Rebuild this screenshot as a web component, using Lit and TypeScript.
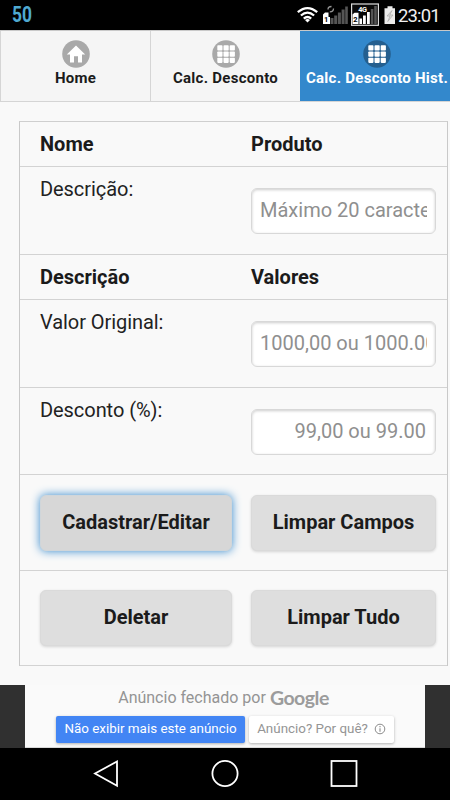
import { LitElement, html, css, svg } from "lit";
import { customElement } from "lit/decorators.js";
import { classMap } from "lit/directives/class-map.js";

const homeIcon = svg`<path d="M14 5.5 L4.8 14.5 H8 V22.5 H12 V16.3 H16 V22.5 H20 V14.5 H23.2 Z" fill="#fff"/>`;
const gridIcon = svg`${[5.3, 11.5, 17.7].map((y) =>
  [5.3, 11.5, 17.7].map((x) => svg`<rect x=${x} y=${y} width="5.2" height="5.2" rx="0.8" fill="#fff"/>`)
)}`;

@customElement("app-root")
export class AppRoot extends LitElement {
  static styles = css`
    :host {
      display: flex;
      flex-direction: column;
      width: 450px;
      height: 800px;
      overflow: hidden;
      background: #f9f9f9;
      color: #1b1b1b;
      font-family: Roboto, "Liberation Sans", sans-serif;
      font-size: 20px;
    }
    * { box-sizing: border-box; }
    svg { display: block; flex: none; }
    .status {
      height: 30px;
      flex: none;
      background: #000;
      display: flex;
      align-items: center;
      justify-content: space-between;
      padding: 0 10px 0 12px;
    }
    .battery-text {
      color: #4fa9d0;
      font: bold 22px/30px Roboto, sans-serif;
      transform: scaleX(0.79);
      transform-origin: left;
    }
    .right { display: flex; align-items: center; }
    .clock { color: #f0f0f0; font-size: 18.5px; line-height: 30px; margin-left: 3px; letter-spacing: -0.85px; padding-top: 2px; width: 42px; white-space: nowrap; }
    .tabs {
      height: 72px;
      flex: none;
      display: grid;
      grid-template-columns: 150px 150px 150px;
      border-top: 1px solid #c9c9c9;
      border-bottom: 1px solid #d5d5d5;
    }
    .tab {
      display: flex;
      flex-direction: column;
      align-items: center;
      padding-top: 9px;
      background: #f5f5f5;
      border-left: 1px solid #d5d5d5;
      font-size: 15px;
      font-weight: 700;
      line-height: 18px;
      white-space: nowrap;
      letter-spacing: 0.27px;
    }
    .tab svg { margin-bottom: 1px; }
    .tab.active { background: #3388cc; border-color: #3388cc; color: #fff; padding-left: 3px; }
    .main { flex: none; height: 583px; padding: 19px 2px 0 19px; }
    .table { border: 1px solid #c9c9c9; border-top-color: #cfcfcf; border-bottom: 0; }
    .row {
      display: grid;
      grid-template-columns: 192px 185px;
      column-gap: 19px;
      padding-left: 20px;
      border-bottom: 1px solid #d3d3d3;
      height: 88px;
      white-space: nowrap;
    }
    .row.head { height: 45px; font-weight: 700; line-height: 44px; }
    .row.short { height: 87px; }
    .row.actions { height: 96px; align-items: start; padding-top: 20px; }
    .row.last { height: 95px; padding-top: 19px; }
    .label { padding-top: 9px; line-height: 26px; font-weight: 400; color: #222; letter-spacing: -0.06px; }
    .field {
      width: 185px;
      height: 46px;
      margin-top: 20.6px;
      padding: 0 8px;
      border: 1px solid #d8d8d8;
      border-radius: 6px;
      background: #fff;
      box-shadow: inset 0 1px 3px rgba(0, 0, 0, 0.2);
      line-height: 43px;
    }
    .hint { overflow: hidden; color: #8f8f8f; }
    .hint.end { text-align: right; padding-right: 1px; }
    .button {
      height: 56px;
      display: flex;
      align-items: center;
      justify-content: center;
      font: 700 20px/26px Roboto, "Liberation Sans", sans-serif;
      color: #1b1b1b;
      background: #dedede;
      border: 1px solid #dadada;
      border-radius: 6px;
      box-shadow: 0 1px 3px rgba(0, 0, 0, 0.15);
      padding: 0 0 3px;
    }
    .button.focus { background: #d7d7d7; border-color: #d0d6da; box-shadow: 0 0 10px #3388cc; }
    .ad { height: 63px; flex: none; background: #303030; padding: 0 25px; }
    .ad-body { height: 63px; background: #fafafa; border-bottom: 1px solid #d8d8d8; display: flex; flex-direction: column; align-items: center; }
    .ad-title { height: 31px; padding-bottom: 6px; display: flex; align-items: center; color: #949494; font-size: 16px; gap: 4px; white-space: nowrap; margin-right: 3px; }
    .brand { font: 700 19.5px/24px Lato, sans-serif; letter-spacing: -0.5px; color: #9c9c9c; }
    .ad-actions { display: flex; gap: 4px; }
    .pill {
      height: 27px;
      display: flex;
      align-items: center;
      justify-content: center;
      gap: 6px;
      padding-bottom: 2px;
      border-radius: 2px;
      box-shadow: 0 1px 3px rgba(0, 0, 0, 0.3);
      font-size: 13.4px;
      white-space: nowrap;
      background: #fff;
      color: #959595;
      width: 145px;
    }
    .pill.primary { background: #4285f4; color: #fff; width: 189px; }
    .system { height: 52px; flex: none; background: #000; display: flex; justify-content: center; }
  `;

  private tab(label: string, icon: unknown, active = false) {
    return html`<div class=${classMap({ tab: true, active })}>
      <svg width="28" height="28" viewBox="0 0 28 28">
        <circle cx="14" cy="14" r="13.8" fill=${active ? "#245f8f" : "#a9a9a9"} />${icon}
      </svg>
      <span>${label}</span>
    </div>`;
  }

  private head(a: string, b: string) {
    return html`<div class="row head"><span>${a}</span><span>${b}</span></div>`;
  }

  private entry(label: string, hint: string, end = false) {
    return html`<div class=${classMap({ row: true, short: end })}>
      <span class="label">${label}</span>
      <div class="field"><div class=${classMap({ hint: true, end })}>${hint}</div></div>
    </div>`;
  }

  render() {
    return html`
      <div class="status">
        <span class="battery-text">50</span>
        <div class="right">
          <svg width="98" height="30" viewBox="296 0 98 30">
            <g fill="none" stroke="#fff" stroke-width="2.3">
              <path d="M296.8 12.2 Q306.5 4 316.2 12.2" />
              <path d="M299.9 15.5 Q306.5 9.7 313.1 15.5" />
              <path d="M302.8 18.6 Q306.5 15.3 310.2 18.6" />
            </g>
            <path d="M304 20 Q306.5 18 309 20 L306.5 22.6Z" fill="#fff" />
            <path d="M322 24 V14.5 L324 12.5 H327.5 V17 H329 V24Z" fill="#fff" />
            <text x="323" y="22.3" font-size="7.5" font-weight="700" font-family="Roboto">1</text>
            <g fill="#555">
              <rect x="329.5" y="18" width="3" height="6" /><rect x="333.2" y="15.5" width="3" height="8.5" />
              <rect x="336.9" y="12.5" width="3" height="11.5" /><rect x="340.6" y="9.5" width="3" height="14.5" />
              <rect x="344.2" y="6.5" width="2.6" height="17.5" />
            </g>
            <path d="M327 9.5 Q327 6.5 330.5 6.5 M332.5 8.5 Q332.5 11.8 328.8 11.8" fill="none" stroke="#999" stroke-width="1.3" />
            <rect x="350.6" y="4" width="26.8" height="21.3" fill="#080808" stroke="#ddd" stroke-width="1.2" />
            <text x="357.3" y="12.2" font-size="7.3" font-weight="700" font-family="Roboto" fill="#fff" letter-spacing="-.5">4G</text>
            <path d="M351.5 24 V14.5 L353.5 12.8 H357.5 V24Z" fill="#fff" />
            <text x="352.3" y="22.3" font-size="7.5" font-weight="700" font-family="Roboto">2</text>
            <g fill="#fff">
              <rect x="358.4" y="18.5" width="2.6" height="5.5" /><rect x="362" y="15.5" width="2.8" height="8.5" />
              <rect x="366" y="12" width="2.8" height="12" />
            </g>
            <rect x="369.8" y="9" width="2.6" height="15" fill="#555" /><rect x="373.2" y="6" width="2.6" height="18" fill="#555" />
            <path d="M383.5 8.2 H386.5 V6.2 H391.5 V8.2 H394.5 V24 H383.5Z" fill="#ececec" />
            <path d="M391 10.5 L386 16 H389 L386.8 21.5 L392 15 H388.8Z" fill="#ddd" stroke="#aaa" stroke-width=".7" />
          </svg>
          <span class="clock">23:01</span>
        </div>
      </div>
      <div class="tabs">
        ${this.tab("Home", homeIcon)} ${this.tab("Calc. Desconto", gridIcon)}
        ${this.tab("Calc. Desconto Hist.", gridIcon, true)}
      </div>
      <div class="main">
        <div class="table">
          ${this.head("Nome", "Produto")} ${this.entry("Descrição:", "Máximo 20 caracteres")}
          ${this.head("Descrição", "Valores")} ${this.entry("Valor Original:", "1000,00 ou 1000.00")}
          ${this.entry("Desconto (%):", "99,00 ou 99.00", true)}
          <div class="row actions">
            <button class="button focus">Cadastrar/Editar</button>
            <button class="button">Limpar Campos</button>
          </div>
          <div class="row actions last">
            <button class="button">Deletar</button>
            <button class="button">Limpar Tudo</button>
          </div>
        </div>
      </div>
      <div class="ad">
        <div class="ad-body">
          <div class="ad-title"><span>Anúncio fechado por</span><span class="brand">Google</span></div>
          <div class="ad-actions">
            <div class="pill primary">Não exibir mais este anúncio</div>
            <div class="pill">
              <span>Anúncio? Por quê?</span>
              <svg width="12" height="12" viewBox="0 0 12 12">
                <circle cx="6" cy="6" r="4.8" fill="none" stroke="#8b8b8b" stroke-width="1" />
                <path d="M6 5.2 V8.8 M6 3 V4.2" stroke="#8b8b8b" stroke-width="1.1" />
              </svg>
            </div>
          </div>
        </div>
      </div>
      <div class="system">
        <svg width="450" height="52" viewBox="0 748 450 52" fill="none" stroke="#fff" stroke-width="1.8">
          <path d="M95 773.5 L117 761.5 V785.8Z" />
          <circle cx="225" cy="773.5" r="12.6" />
          <rect x="331.5" y="761" width="25" height="25" />
        </svg>
      </div>
    `;
  }
}
